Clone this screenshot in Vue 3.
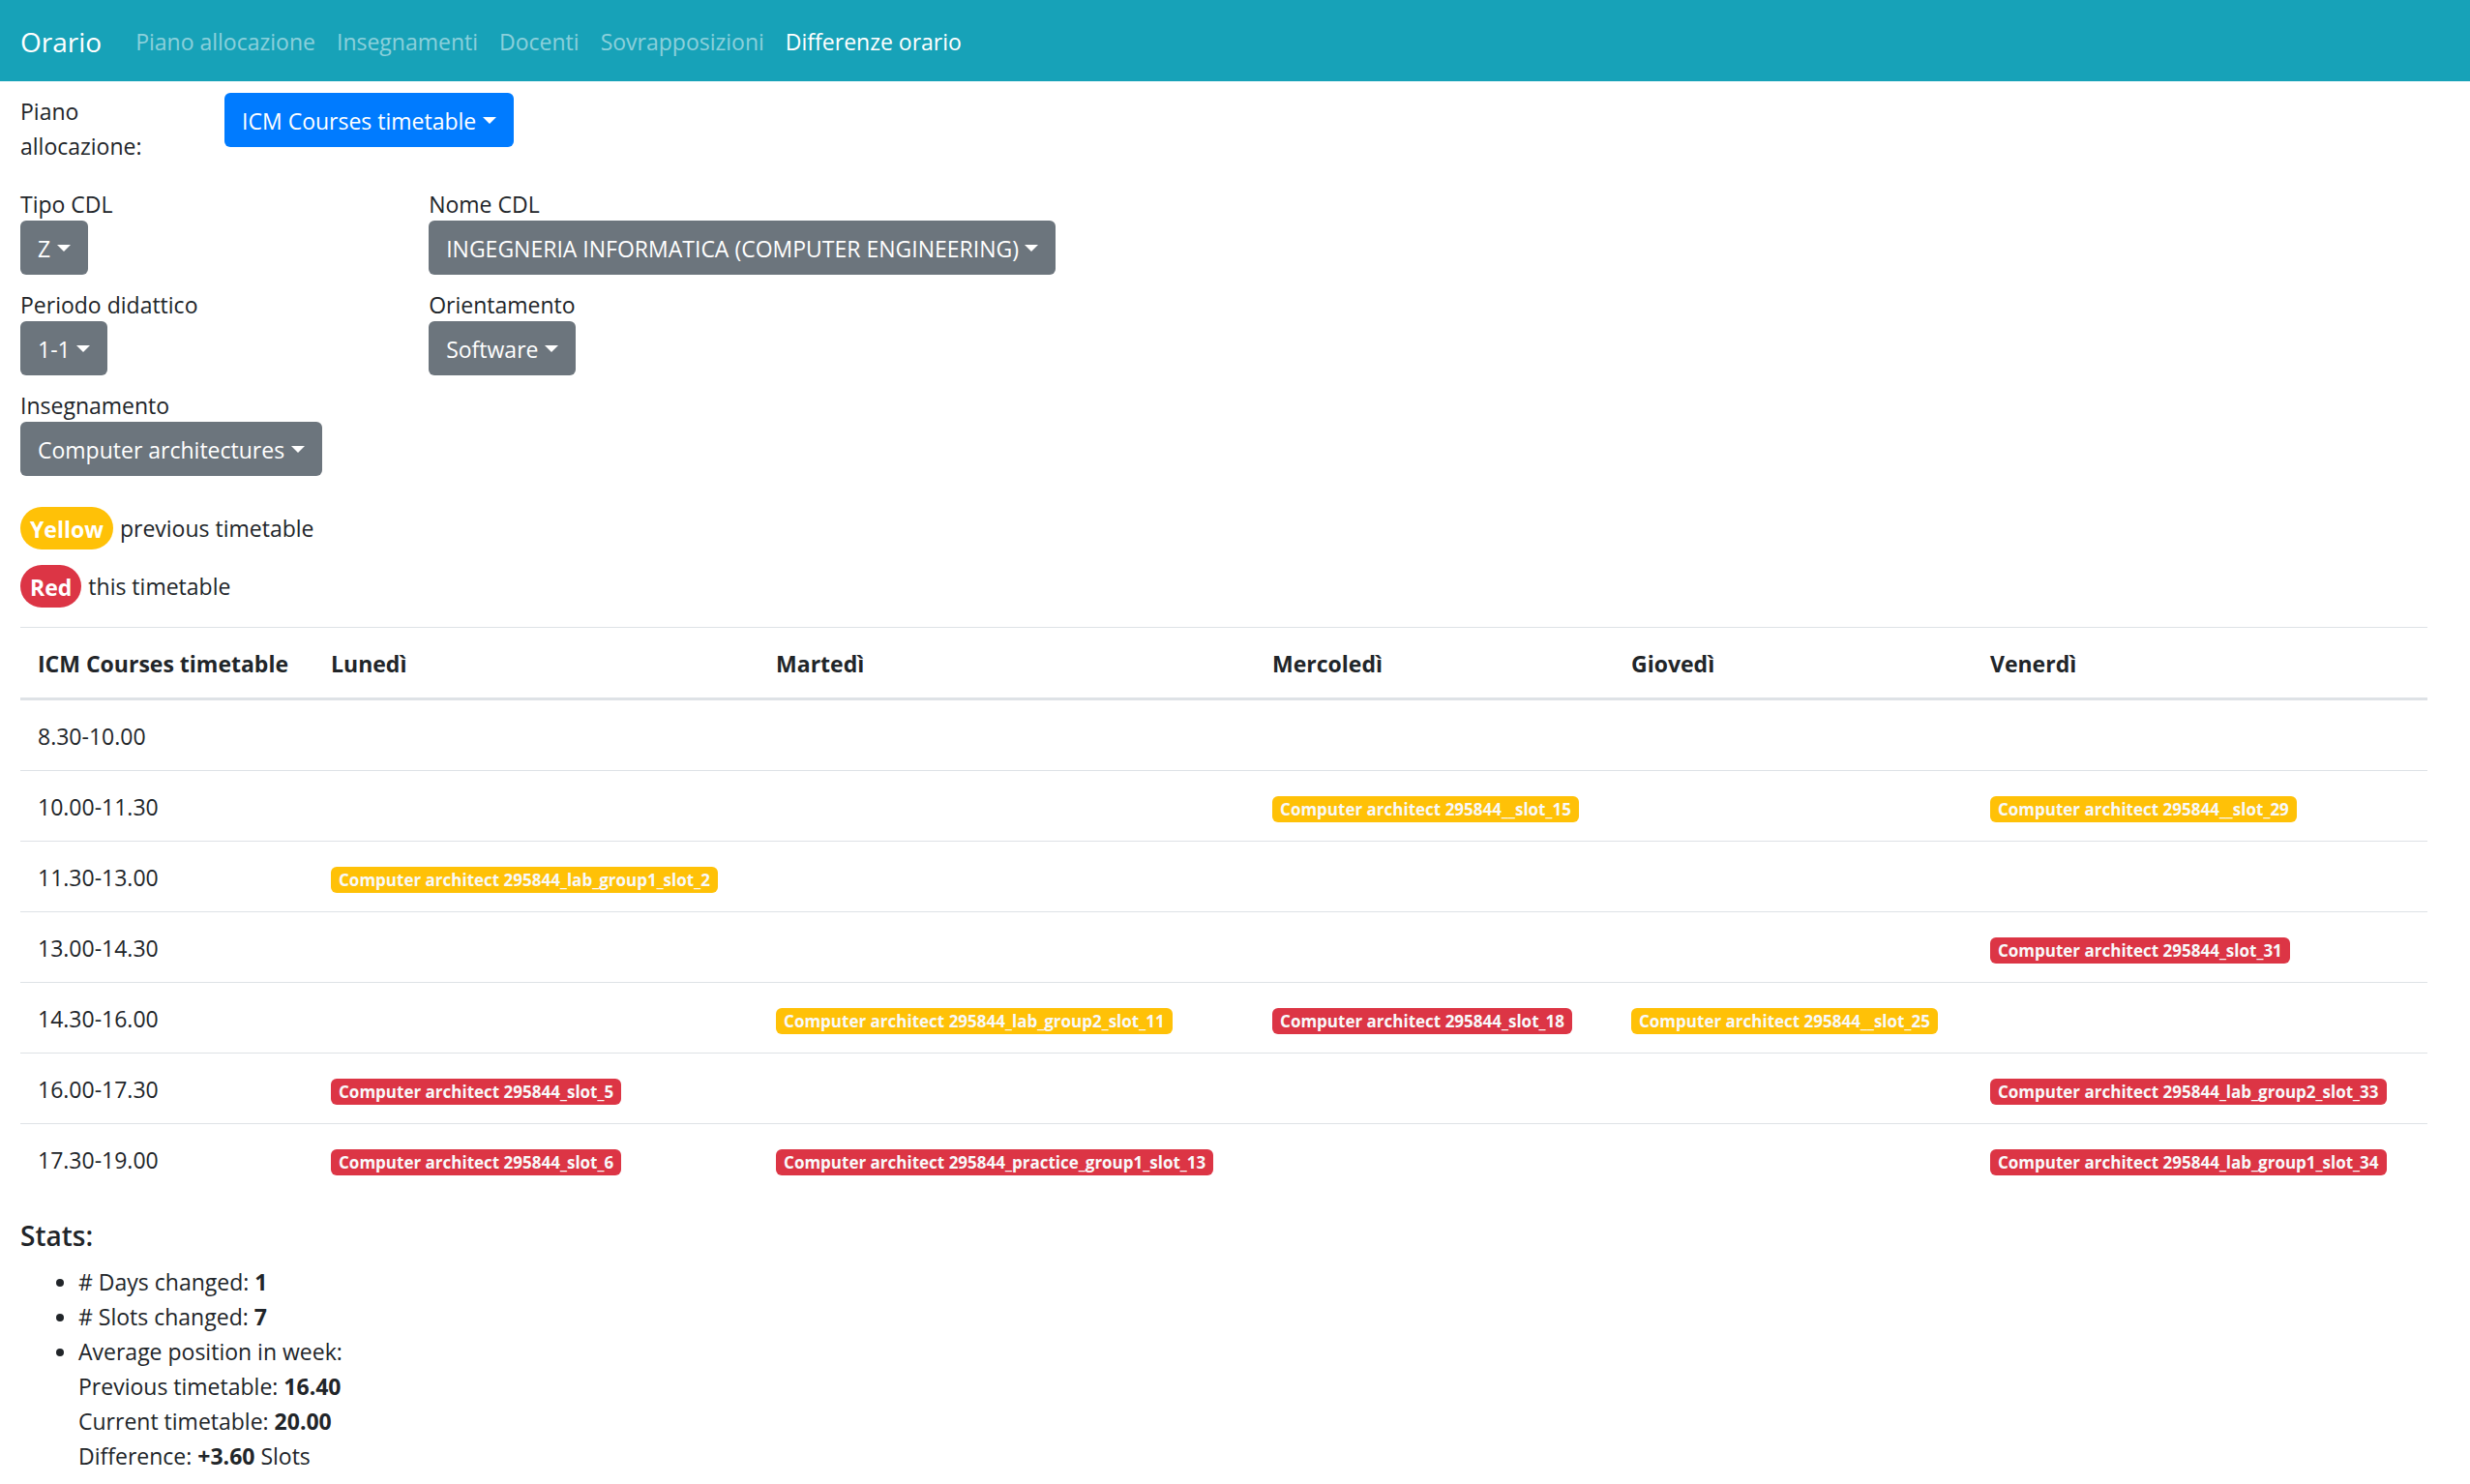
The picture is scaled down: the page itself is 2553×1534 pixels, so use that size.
<script setup>
import { ref } from 'vue'

const links = ['Piano allocazione', 'Insegnamenti', 'Docenti', 'Sovrapposizioni', 'Differenze orario']
const current = 'Differenze orario'

const plan = ref('ICM Courses timetable')
const filters = [
  { id: 'tipo', label: 'Tipo CDL', value: 'Z' },
  { id: 'nome', label: 'Nome CDL', value: 'INGEGNERIA INFORMATICA (COMPUTER ENGINEERING)', wide: true },
  { id: 'periodo', label: 'Periodo didattico', value: '1-1' },
  { id: 'orientamento', label: 'Orientamento', value: 'Software', wide: true },
  { id: 'insegnamento', label: 'Insegnamento', value: 'Computer architectures' },
]

const days = ['Lunedì', 'Martedì', 'Mercoledì', 'Giovedì', 'Venerdì']
const prev = (slot) => ({ kind: 'previous', text: `Computer architect 295844_${slot}` })
const now = (slot) => ({ kind: 'current', text: `Computer architect 295844_${slot}` })
const rows = [
  { time: '8.30-10.00', cells: [null, null, null, null, null] },
  { time: '10.00-11.30', cells: [null, null, prev('_slot_15'), null, prev('_slot_29')] },
  { time: '11.30-13.00', cells: [prev('lab_group1_slot_2'), null, null, null, null] },
  { time: '13.00-14.30', cells: [null, null, null, null, now('slot_31')] },
  { time: '14.30-16.00', cells: [null, prev('lab_group2_slot_11'), now('slot_18'), prev('_slot_25'), null] },
  { time: '16.00-17.30', cells: [now('slot_5'), null, null, null, now('lab_group2_slot_33')] },
  { time: '17.30-19.00', cells: [now('slot_6'), now('practice_group1_slot_13'), null, null, now('lab_group1_slot_34')] },
]
</script>

<template>
  <div class="page">
    <nav class="navbar">
      <a class="brand" href="#">Orario</a>
      <a v-for="link in links" :key="link" class="nav-link" :class="{ active: link === current }" href="#">{{ link }}</a>
    </nav>

    <main class="content">
      <div class="grid">
        <label class="plan-label" for="plan">Piano allocazione:</label>
        <div class="plan-field">
          <span class="dropdown primary">
            <select id="plan" v-model="plan"><option>{{ plan }}</option></select>
          </span>
        </div>
      </div>

      <div class="grid filters">
        <div v-for="f in filters" :key="f.id" class="field" :class="{ wide: f.wide }">
          <label class="field-label" :for="f.id">{{ f.label }}</label>
          <span class="dropdown">
            <select :id="f.id"><option>{{ f.value }}</option></select>
          </span>
        </div>
      </div>

      <div class="legend">
        <p><span class="pill previous">Yellow</span> previous timetable</p>
        <p><span class="pill current">Red</span> this timetable</p>
      </div>

      <table>
        <colgroup>
          <col class="col-time"><col class="col-mon"><col class="col-tue"><col class="col-mid"><col class="col-mid"><col>
        </colgroup>
        <thead>
          <tr>
            <th scope="col">{{ plan }}</th>
            <th v-for="day in days" :key="day" scope="col">{{ day }}</th>
          </tr>
        </thead>
        <tbody>
          <tr v-for="row in rows" :key="row.time">
            <td>{{ row.time }}</td>
            <td v-for="(cell, i) in row.cells" :key="i">
              <span v-if="cell" class="badge" :class="cell.kind">{{ cell.text }}</span>
            </td>
          </tr>
        </tbody>
      </table>

      <h5>Stats:</h5>
      <ul>
        <li># Days changed: <b>1</b></li>
        <li># Slots changed: <b>7</b></li>
        <li>
          Average position in week:<br>
          Previous timetable: <b>16.40</b><br>
          Current timetable: <b>20.00</b><br>
          Difference: <b>+3.60</b> Slots
        </li>
      </ul>
    </main>
  </div>
</template>

<style>
body {
  margin: 0;
  background: #fff;
}
</style>

<style scoped>
.page {
  font-family: "Open Sans", "Noto Sans", sans-serif;
  font-size: 23px;
  line-height: 36px;
  color: #212529;
}
.navbar {
  display: flex;
  align-items: center;
  height: 82px;
  padding: 2px 21px 0;
  background: #17a2b8;
}
.brand {
  margin-right: 24px;
  font-size: 28px;
  color: #fff;
  text-decoration: none;
}
.nav-link {
  padding: 11px;
  color: rgba(255, 255, 255, 0.5);
  text-decoration: none;
}
.nav-link.active {
  color: #fff;
}
.content {
  padding: 12px 44px 0 21px;
}
.grid {
  display: grid;
  grid-template-columns: repeat(12, minmax(0, 1fr));
  column-gap: 45px;
}
.plan-label {
  height: 71px;
  padding-top: 1px;
}
.plan-field {
  grid-column: span 3;
}
.filters {
  margin-top: 24px;
  row-gap: 12px;
}
.field {
  grid-column: 1 / span 2;
  display: flex;
  flex-direction: column;
  align-items: flex-start;
}
.field.wide {
  grid-column: 3 / span 4;
}
.field-label {
  height: 36px;
  line-height: 38px;
}
.dropdown {
  position: relative;
  display: block;
  width: max-content;
}
.dropdown::after {
  content: "";
  position: absolute;
  top: 25px;
  right: 18px;
  border: 7px solid transparent;
  border-top-color: #fff;
  border-bottom: 0;
  pointer-events: none;
}
select {
  display: block;
  appearance: none;
  height: 56px;
  margin: 0;
  padding: 2px 38px 0 18px;
  border: 0;
  border-radius: 6px;
  background: #6c757d;
  color: #fff;
  font: inherit;
}
.primary select {
  background: #007bff;
}
.legend {
  display: flex;
  flex-direction: column;
  gap: 16px;
  margin: 32px 0 20px;
}
.legend p {
  display: flex;
  align-items: center;
  gap: 7px;
  height: 44px;
  margin: 0;
  line-height: 46px;
}
.pill {
  height: 44px;
  padding: 0 10px;
  border-radius: 22px;
  font-weight: 700;
  color: #fff;
}
.previous {
  background: #ffc107;
}
.current {
  background: #dc3545;
}
table {
  width: 100%;
  table-layout: fixed;
  border-collapse: separate;
  border-spacing: 0;
}
.col-time { width: 12.18%; }
.col-mon { width: 18.49%; }
.col-tue { width: 20.62%; }
.col-mid { width: 14.91%; }
th,
td {
  height: 36px;
  padding: 19px 18px 17px;
  text-align: left;
  white-space: nowrap;
  vertical-align: top;
}
th {
  border-top: 1px solid #dee2e6;
  border-bottom: 3px solid #dee2e6;
  font-weight: 700;
}
td {
  border-bottom: 1px solid #dee2e6;
}
tbody tr:last-child td {
  border-bottom: 0;
}
.badge {
  display: block;
  width: max-content;
  margin-top: 7px;
  padding: 0 8px;
  border-radius: 6px;
  font-size: 17px;
  line-height: 27px;
  font-weight: 700;
  color: #f8f9fa;
}
h5 {
  margin: 25px 0 12px;
  font-size: 28px;
  line-height: 36px;
  font-weight: 600;
}
ul {
  margin: 0;
  padding-left: 60px;
}
</style>
